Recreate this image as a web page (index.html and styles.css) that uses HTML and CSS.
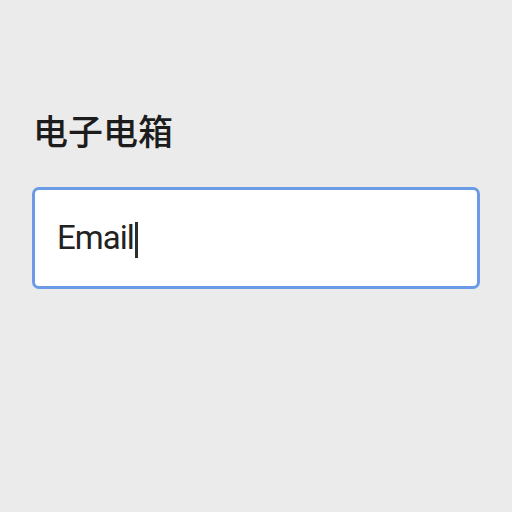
FILE: index.html
```html
<!DOCTYPE html>
<html lang="zh">
<head>
<meta charset="utf-8">
<link rel="stylesheet" href="styles.css">
</head>
<body>
<div class="page">
  <label class="label">电子电箱</label>
  <div class="input">
    <span class="value">Email</span><span class="caret"></span>
  </div>
</div>
</body>
</html>
```
FILE: styles.css
```css
html, body {
  margin: 0;
  padding: 0;
  background: #ebebeb;
}
.page {
  width: 512px;
  height: 512px;
  box-sizing: border-box;
  padding: 108px 32px 0 32px;
  display: flex;
  flex-direction: column;
  font-family: "Noto Sans", "Noto Sans CJK SC", sans-serif;
}
.label {
  font-size: 35px;
  line-height: 44px;
  font-weight: 500;
  color: #1c1c1c;
  font-family: "Noto Sans CJK SC", sans-serif;
  margin-bottom: 35px;
  margin-left: 1px;
}
.input {
  width: 448px;
  height: 102px;
  box-sizing: border-box;
  border: 3px solid #6b9ae6;
  border-radius: 7px;
  background: #ffffff;
  display: flex;
  align-items: center;
  padding-left: 22px;
}
.value {
  font-family: Roboto, "Noto Sans", sans-serif;
  font-size: 33px;
  letter-spacing: -1px;
  color: #222222;
  line-height: 40px;
}
.caret {
  width: 3px;
  height: 36px;
  background: #2e2e2e;
  margin-left: 1px;
  margin-top: 4px;
}
```
